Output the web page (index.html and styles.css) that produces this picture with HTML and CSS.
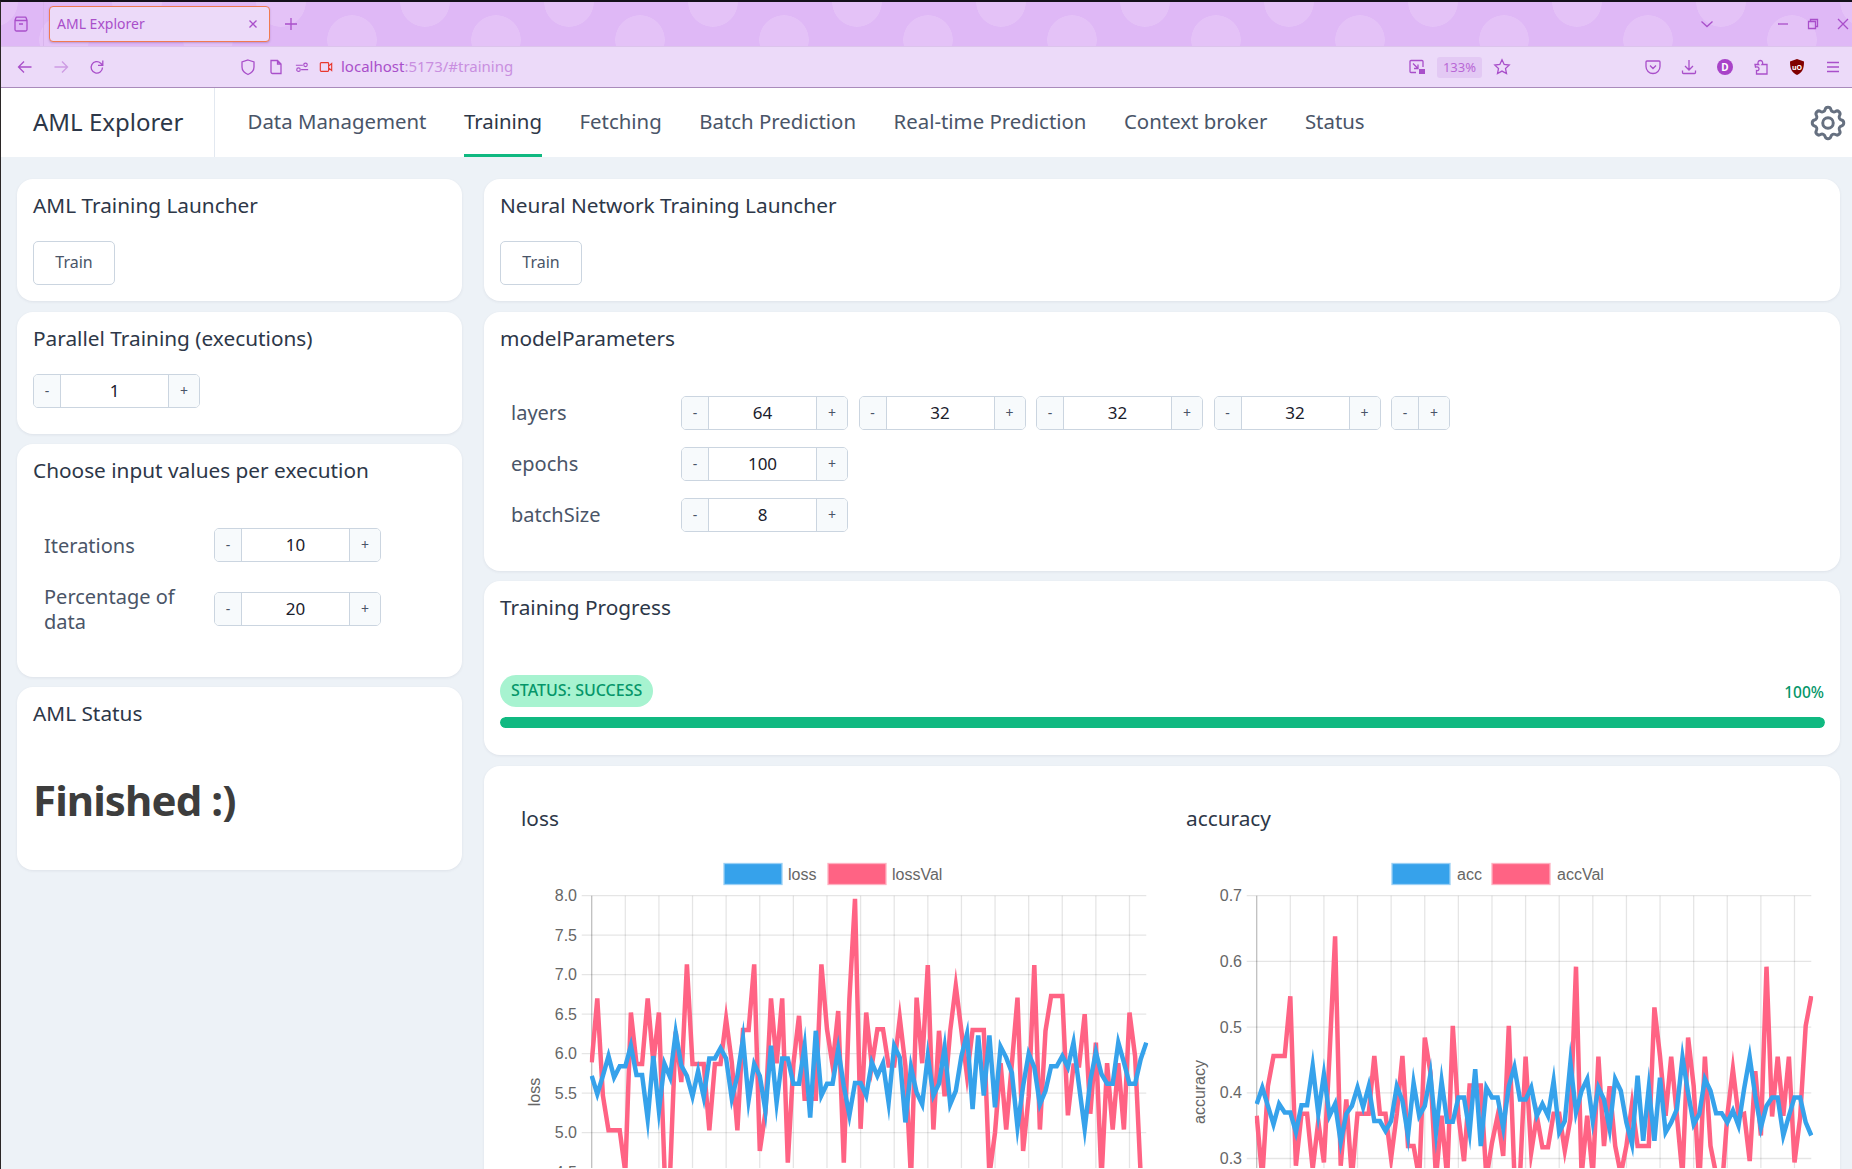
FILE: index.html
```html
<!DOCTYPE html>
<html>
<head>
    <meta charset="UTF-8">
    <title>AML Explorer</title>
    <link rel="stylesheet" href="styles.css">
</head>
<body>
<div class="window">
    <div class="tabbar">
        <svg class="ic view-btn" viewBox="0 0 18 18"><path d="M3 5.5h12v9a1.5 1.5 0 0 1-1.500 1.500h-9a1.500 1.500 0 0 1-1.500-1.500zM3 5.500l.8-2.500a1 1 0 0 1 1-.8h8.400a1 1 0 0 1 1 .8l.8 2.500M7 9h4"/></svg>
        <div class="tab-sep"></div>
        <div class="tab">
            <span class="tab-title">AML Explorer</span>
            <svg class="ic tab-close" viewBox="0 0 10 10"><path d="M1.500 1.500l7 7M8.500 1.500l-7 7"/></svg>
        </div>
        <svg class="ic new-tab" viewBox="0 0 14 14"><path d="M7 1v12M1 7h12"/></svg>
        <div class="tabbar-right">
            <svg class="ic chevron" viewBox="0 0 14 8"><path d="M1.500 1.500L7 6.500l5.500-5"/></svg>
            <svg class="ic win-min" viewBox="0 0 12 12"><path d="M1 6h10"/></svg>
            <svg class="ic win-max" viewBox="0 0 12 12"><path d="M1.500 3.500h7v7h-7zM3.500 3.500v-2h7v7h-2"/></svg>
            <svg class="ic win-close" viewBox="0 0 12 12"><path d="M1 1l10 10M11 1L1 11"/></svg>
        </div>
    </div>
    <div class="toolbar">
        <svg class="ic tool" viewBox="0 0 18 18"><path d="M15.500 9h-13M8 3.500L2.500 9 8 14.500"/></svg>
        <svg class="ic tool dim" viewBox="0 0 18 18"><path d="M2.500 9h13M10 3.500L15.500 9 10 14.500"/></svg>
        <svg class="ic tool" viewBox="0 0 18 18"><path d="M14.500 9.500a5.700 5.700 0 1 1-1.800-4.300l1.800 1.800M14.800 2.500v4.800H10"/></svg>
        <div class="url-group">
            <svg class="ic tool" viewBox="0 0 18 18"><path d="M9 2l6 2v5c0 3.500-2.500 6-6 7.500C5.500 15 3 12.500 3 9V4z"/></svg>
            <svg class="ic tool" viewBox="0 0 18 18"><path d="M4 2.500h6.500L14 6v9.500H5.500A1.500 1.500 0 0 1 4 14zM10.500 2.500V6H14"/></svg>
            <svg class="ic tool-sm" viewBox="0 0 16 16"><path d="M1 6h8M7 11h8"/><circle cx="12" cy="5.500" r="2"/><circle cx="4" cy="11" r="2"/></svg>
            <svg class="ic tool-sm red" viewBox="0 0 16 16"><path d="M2.500 3h7.500a1 1 0 0 1 1 1v8a1 1 0 0 1-1 1H2.500a1 1 0 0 1-1-1V4a1 1 0 0 1 1-1zM11 7l3.500-3v8L11 9"/></svg>
            <span class="url"><span class="url-host">localhost</span>:5173/#training</span>
        </div>
        <div class="tool-right">
            <svg class="ic tool" viewBox="0 0 18 18"><path d="M8 14.500H3a1 1 0 0 1-1-1v-10a1 1 0 0 1 1-1h11a1 1 0 0 1 1 1V9M5 5.500l5 5M10 6.500v4H6"/><rect class="ic-fill" x="11" y="11" width="6" height="5"/></svg>
            <span class="zoom-level">133%</span>
            <svg class="ic tool" viewBox="0 0 18 18"><path d="M9 1.800l2.200 4.700 5 .6-3.700 3.500 1 5L9 13.100l-4.500 2.500 1-5L1.800 7.100l5-.6z"/></svg>
            <div class="ext-group">
                <svg class="ic tool" viewBox="0 0 18 18"><path d="M3 3h12a1 1 0 0 1 1 1v4.500a7 7 0 0 1-14 0V4a1 1 0 0 1 1-1zM6 7.500l3 3 3-3"/></svg>
                <svg class="ic tool" viewBox="0 0 18 18"><path d="M9 2v9.500M5 8l4 4 4-4M2.500 12.500v2a1 1 0 0 0 1 1h11a1 1 0 0 0 1-1v-2"/></svg>
                <span class="avatar">D</span>
                <svg class="ic tool" viewBox="0 0 18 18"><path d="M3 6.500h3.500c-1-1 -.8-4 1.800-4s2.800 3 1.800 4H15v9.500H4.500v-3.500c1.500.5 2.500-.2 2.500-1.700S5.500 8.500 3.500 9.200z"/></svg>
                <svg class="tool" viewBox="0 0 18 18"><path class="ublock" d="M9 1l7 2.500c0 7-1.500 11-7 13.500C3.500 14.500 2 10.500 2 3.500z"/><text class="ublock-text" x="9" y="11.500">uO</text></svg>
                <svg class="ic tool" viewBox="0 0 18 18"><path d="M3 4.500h12M3 9h12M3 13.500h12"/></svg>
            </div>
        </div>
    </div>

    <div class="navbar">
        <div class="brand">AML Explorer</div>
        <nav class="nav">
            <a>Data Management</a>
            <a class="active">Training</a>
            <a>Fetching</a>
            <a>Batch Prediction</a>
            <a>Real-time Prediction</a>
            <a>Context broker</a>
            <a>Status</a>
        </nav>
        <svg class="gear" viewBox="0 0 24 24"><path d="M10.325 4.317c.426-1.756 2.924-1.756 3.350 0a1.724 1.724 0 002.573 1.066c1.543-.94 3.310.826 2.370 2.370a1.724 1.724 0 001.065 2.572c1.756.426 1.756 2.924 0 3.350a1.724 1.724 0 00-1.066 2.573c.94 1.543-.826 3.310-2.370 2.370a1.724 1.724 0 00-2.572 1.065c-.426 1.756-2.924 1.756-3.350 0a1.724 1.724 0 00-2.573-1.066c-1.543.94-3.310-.826-2.370-2.370a1.724 1.724 0 00-1.065-2.572c-1.756-.426-1.756-2.924 0-3.350a1.724 1.724 0 001.066-2.573c-.94-1.543.826-3.310 2.370-2.370.996.608 2.296.07 2.572-1.065z"/><path d="M15 12a3 3 0 11-6 0 3 3 0 016 0z"/></svg>
    </div>

    <div class="content">
        <div class="col">
            <section class="card">
                <h2>AML Training Launcher</h2>
                <button class="btn">Train</button>
            </section>
            <section class="card">
                <h2>Parallel Training (executions)</h2>
                <div class="single-step">
                    <div class="stepper"><span class="minus">-</span><span class="val">1</span><span class="plus">+</span></div>
                </div>
            </section>
            <section class="card">
                <h2>Choose input values per execution</h2>
                <div class="params">
                    <div class="param">
                        <label>Iterations</label>
                        <div class="stepper"><span class="minus">-</span><span class="val">10</span><span class="plus">+</span></div>
                    </div>
                    <div class="param">
                        <label>Percentage of data</label>
                        <div class="stepper"><span class="minus">-</span><span class="val">20</span><span class="plus">+</span></div>
                    </div>
                </div>
            </section>
            <section class="card">
                <h2>AML Status</h2>
                <h1 class="finished">Finished :)</h1>
            </section>
        </div>
        <div class="col">
            <section class="card">
                <h2>Neural Network Training Launcher</h2>
                <button class="btn">Train</button>
            </section>
            <section class="card">
                <h2>modelParameters</h2>
                <div class="params">
                    <div class="param">
                        <label>layers</label>
                        <div class="stepper"><span class="minus">-</span><span class="val">64</span><span class="plus">+</span></div>
                        <div class="stepper"><span class="minus">-</span><span class="val">32</span><span class="plus">+</span></div>
                        <div class="stepper"><span class="minus">-</span><span class="val">32</span><span class="plus">+</span></div>
                        <div class="stepper"><span class="minus">-</span><span class="val">32</span><span class="plus">+</span></div>
                        <div class="stepper"><span class="minus">-</span><span class="plus">+</span></div>
                    </div>
                    <div class="param">
                        <label>epochs</label>
                        <div class="stepper"><span class="minus">-</span><span class="val">100</span><span class="plus">+</span></div>
                    </div>
                    <div class="param">
                        <label>batchSize</label>
                        <div class="stepper"><span class="minus">-</span><span class="val">8</span><span class="plus">+</span></div>
                    </div>
                </div>
            </section>
            <section class="card">
                <h2>Training Progress</h2>
                <div class="progress-head">
                    <span class="badge">STATUS: SUCCESS</span>
                    <span class="percent">100%</span>
                </div>
                <div class="bar"><div class="bar-fill" style="width:100%"></div></div>
            </section>
            <section class="card charts">
                <div class="chart">
                    <h2>loss</h2>
                    <div id="lossChart"></div>
                </div>
                <div class="chart">
                    <h2>accuracy</h2>
                    <div id="accChart"></div>
                </div>
            </section>
        </div>
    </div>
</div>
<script src="charts.js"></script>
</body>
</html>
```
FILE: styles.css
```css
*{ margin:0; padding:0; box-sizing:border-box; }
html, body{ height:100%; overflow:hidden; }
body{ font-family:"Noto Sans", sans-serif; background:#edf2f7; color:#2d3748; }

.window{ height:1169px; overflow:hidden; border-top:2px solid #14101a; border-left:1px solid #2b2727; }

/* browser chrome */
.tabbar{
    display:flex; align-items:center; height:45px; padding:0 3px 0 11px;
    background-color:#dfb8f6;
    background-image:radial-gradient(circle 25px at 72px 0, #e4c2f7 98%, transparent 100%), radial-gradient(circle 25px at 72px 38px, #e4c2f7 98%, transparent 100%);
    background-size:144px 44px;
    background-position:64px 0, -9px 0;
    background-repeat:repeat-x;
    border-bottom:1px solid #dcc4ec;
}
.ic{ fill:none; stroke:#a94fca; stroke-width:1.3; flex:none; }
.ic-fill{ fill:#a94fca; stroke:none; }
.view-btn{ width:18px; height:18px; }
.tab-sep{ width:1px; height:44px; background:#d8b4ec; margin:0 5px 0 13px; }
.tab{
    display:flex; align-items:center; justify-content:space-between;
    width:221px; height:36px; padding:0 11px 0 7px; margin-top:-1px;
    background:#ecdaf9; border:1px solid #f07a50; border-radius:4px;
    box-shadow:0 1px 2px rgba(80,30,100,.25);
}
.tab-title{ font-size:14px; color:#a94fca; }
.tab-close{ width:10px; height:10px; }
.new-tab{ width:14px; height:14px; margin-left:14px; }
.tabbar-right{ display:flex; align-items:center; margin-left:auto; }
.chevron{ width:14px; height:8px; margin-right:63px; }
.win-min, .win-max, .win-close{ width:12px; height:12px; margin-left:18px; }
.win-min{ margin-left:0; }

.toolbar{
    display:flex; align-items:center; gap:18px; height:41px; padding:0 10px 0 15px;
    background:#ecdaf9; border-bottom:1px solid #a98bbb;
}
.tool{ width:18px; height:18px; flex:none; }
.tool-sm{ width:14px; height:14px; }
.dim{ opacity:.45; }
.red{ stroke:#e9382e; }
.url-group{ display:flex; align-items:center; gap:10px; margin-left:115px; }
.url{ font-size:15px; line-height:18px; margin:-2px 0 0 -2px; color:#c98fe0; }
.url-host{ color:#a94fca; }
.tool-right{ display:flex; align-items:center; gap:11px; margin-left:auto; }
.zoom-level{ width:45px; height:21px; font-size:13px; line-height:21px; text-align:center; color:#b968d6; background:#e3c9f4; border-radius:3px; }
.ext-group{ display:flex; align-items:center; gap:18px; margin-left:122px; }
.avatar{ width:16px; height:16px; margin:0 1px; border-radius:50%; background:#a843c8; color:#fff; font-size:10px; font-weight:700; line-height:16px; text-align:center; }
.ublock{ fill:#800000; }
.ublock-text{ fill:#fff; font-size:7px; font-weight:700; text-anchor:middle; }

/* app nav */
.navbar{ display:flex; align-items:stretch; height:69px; background:#fff; }
.brand{ width:214px; padding-left:32px; line-height:67px; font-size:24px; border-right:1px solid #e2e8f0; }
.nav{ display:flex; gap:37.500px; padding-left:32.500px; }
.nav a{ display:block; height:69px; line-height:66px; font-size:20.400px; color:#4a5568; border-bottom:3px solid transparent; }
.nav a.active{ color:#2d3748; border-bottom-color:#10b981; }
.gear{ width:42px; height:42px; margin:14px 3px 0 auto; fill:none; stroke:#667080; stroke-width:1.700; }

/* page */
.content{ display:grid; grid-template-columns:445px 1356px; column-gap:22px; padding:22px 0 0 16px; }
.col{ display:flex; flex-direction:column; gap:10.67px; }
.card{ padding:11px 16px 16px; background:#fff; border-radius:16px; box-shadow:0 1px 3px rgba(45,55,72,.08); }
h2{ height:32px; line-height:30px; font-size:20.800px; font-weight:400; color:#2d3748; }
.btn{ display:block; width:82px; height:44px; margin-top:19px; padding-bottom:2px; font:inherit; font-size:16px; color:#4a5568; background:#fff; border:1px solid #cbd5e0; border-radius:5px; }

.single-step{ margin:19px 0 10px; }
.stepper{ display:inline-flex; height:34px; flex:none; font-size:17px; color:#1a202c; border:1px solid #cbd5e0; border-radius:5px; overflow:hidden; }
.stepper span{ display:block; line-height:31px; text-align:center; }
.minus, .plus{ background:#f7fafc; font-size:14px; color:#4a5568; }
.minus{ width:26px; }
.plus{ width:31px; border-left:1px solid #cbd5e0; }
.val{ width:108px; border-left:1px solid #cbd5e0; }

.params{ display:flex; flex-direction:column; gap:17px; margin:41px 0 23px; padding-left:11px; }
.param{ display:flex; align-items:center; gap:10.500px; }
.param label{ width:159.500px; flex:none; padding:4.200px 0; font-size:20px; line-height:25px; color:#4a5568; }

.progress-head{ display:flex; align-items:center; justify-content:space-between; height:32px; margin-top:51px; }
.badge{ height:32px; padding:0 11px; line-height:31px; font-size:16px; font-weight:500; color:#059669; background:#a7f3d0; border-radius:16px; }
.percent{ margin-top:2px; font-size:15.500px; font-weight:500; color:#059669; }
.bar{ height:11px; margin:10px -1px 11px 0; background:#d1fae5; border-radius:6px; overflow:hidden; }
.bar-fill{ height:11px; background:#10b981; border-radius:6px; }

.finished{ height:60px; margin:40px 0 24px; line-height:60px; font-size:42px; letter-spacing:-.9px; font-weight:700; color:#3d3d3d; }

.charts{ display:grid; grid-template-columns:665px 665px; padding:37px 0 0 37px; height:600px; }
.chart svg{ display:block; margin-top:14px; }
.tick, .legend-label, .axis-title{ font-family:"Liberation Sans", Arial, sans-serif; font-size:16px; fill:#666; }
.tick{ text-anchor:end; }
.axis-title{ text-anchor:middle; }
```
FILE: charts.js
```js
(function(){
    var lossVal = [5.89,6.70,5.47,5.03,5.03,5.03,4.50,6.52,5.87,5.87,6.70,5.89,6.52,4.54,4.48,6.28,5.64,7.13,5.87,5.87,5.87,5.03,5.87,5.87,6.44,5.89,5.03,6.30,6.30,7.13,4.77,5.26,6.70,5.88,6.70,4.62,5.87,6.48,5.43,5.43,5.43,7.13,6.31,5.85,6.54,4.62,6.69,7.96,5.05,6.52,5.85,6.31,6.31,5.85,5.85,6.45,5.85,4.41,6.71,5.88,7.12,5.04,6.29,5.46,6.29,6.86,6.29,5.72,6.30,6.30,6.30,4.46,5.00,5.88,5.04,5.88,6.71,4.77,5.46,7.12,5.04,6.29,6.73,6.73,6.73,5.22,5.85,5.85,6.50,5.24,6.14,4.41,5.88,5.04,5.88,5.04,6.52,5.97,4.46,4.20];
    var loss = [5.72,5.49,5.72,5.97,5.70,5.84,5.84,6.10,5.73,5.73,5.17,5.97,5.28,5.87,5.70,6.27,5.85,5.72,5.46,5.78,5.45,5.94,5.94,6.07,5.94,5.43,5.72,6.19,5.41,5.87,5.72,5.28,6.10,5.38,5.94,5.94,5.62,5.62,6.10,5.19,6.29,5.47,5.62,5.62,6.06,5.59,5.22,5.63,5.63,5.47,5.89,5.72,5.88,5.38,6.10,5.95,5.13,5.83,5.51,5.36,5.97,5.47,5.62,6.08,5.36,5.53,5.97,6.25,5.30,6.23,5.47,6.23,5.32,6.09,5.95,5.76,5.07,5.59,6.00,5.83,5.36,5.53,5.84,5.84,5.97,5.83,6.14,5.59,5.05,5.66,6.02,5.74,5.62,5.62,6.14,5.89,5.62,5.62,5.93,6.14];
    var accVal = [.365,.27,.41,.456,.456,.456,.547,.289,.368,.368,.284,.357,.294,.456,.638,.289,.39,.27,.368,.368,.368,.456,.368,.368,.30,.368,.456,.319,.319,.27,.484,.431,.27,.365,.27,.502,.365,.296,.411,.411,.411,.27,.324,.365,.304,.502,.274,.274,.455,.309,.365,.317,.317,.368,.368,.312,.36,.592,.274,.365,.274,.455,.319,.41,.319,.276,.319,.383,.319,.319,.319,.53,.456,.365,.455,.365,.274,.484,.41,.26,.455,.319,.276,.25,.365,.436,.365,.368,.296,.433,.335,.592,.364,.455,.365,.455,.294,.362,.502,.547];
    var acc = [.383,.408,.38,.352,.383,.37,.37,.34,.381,.381,.441,.368,.428,.365,.383,.325,.368,.38,.408,.378,.41,.357,.357,.342,.357,.41,.388,.335,.415,.365,.38,.428,.34,.418,.356,.356,.393,.393,.34,.436,.319,.408,.393,.393,.347,.41,.439,.39,.39,.408,.365,.383,.365,.418,.34,.357,.446,.37,.403,.421,.357,.408,.39,.345,.421,.403,.355,.322,.426,.327,.408,.327,.423,.34,.355,.375,.454,.40,.352,.368,.421,.403,.369,.369,.355,.373,.35,.406,.454,.395,.347,.38,.393,.393,.335,.365,.393,.393,.355,.335];

    var X0 = 70.7, X1 = 625.3, TOP = 46.7, BLUE = '#36a2eb', PINK = '#ff6384';

    function line(data, yOf, color, clipId){
        var step = (X1 - X0) / (data.length - 1);
        var pts = data.map(function(v, i){
            return (X0 + i * step).toFixed(1) + ',' + yOf(v).toFixed(1);
        }).join(' ');
        return '<polyline clip-path="url(#' + clipId + ')" points="' + pts + '" fill="none" stroke="' + color + '" stroke-width="4.500" stroke-miterlimit="10"/>';
    }

    function legendItem(x, color, border, labelX, label){
        return '<rect x="' + x + '" y="14.500" width="58" height="21" fill="' + color + '" stroke="' + border + '" stroke-width="1.300"/>' +
            '<text class="legend-label" x="' + labelX + '" y="31">' + label + '</text>';
    }

    function draw(id, o){
        var yOf = function(v){ return TOP + (o.max - v) * o.scale; };
        var clipId = id + 'Clip';
        var s = '<svg width="650" height="319"><defs><clipPath id="' + clipId + '"><rect x="' + (X0 - 2) + '" y="' + (TOP - 2) + '" width="' + (X1 - X0 + 4) + '" height="400"/></clipPath></defs>';
        var i, x, y;
        for(i = 0; i <= 16; i++){
            x = X0 + i * (X1 - X0) / 99 * 6;
            s += '<line x1="' + x + '" x2="' + x + '" y1="' + TOP + '" y2="330" stroke="rgba(0,0,0,' + (i ? .1 : .25) + ')" stroke-width="1.300"/>';
        }
        o.ticks.forEach(function(t){
            y = yOf(t);
            s += '<line x1="60.700" x2="' + X1 + '" y1="' + y + '" y2="' + y + '" stroke="rgba(0,0,0,.1)" stroke-width="1.300"/>';
            s += '<text class="tick" x="56" y="' + (y + 5.500) + '">' + t.toFixed(1) + '</text>';
        });
        s += legendItem(o.legend[0], BLUE, '#9ad0f5', o.legend[1], o.names[0]);
        s += legendItem(o.legend[2], PINK, '#ffb1c1', o.legend[3], o.names[1]);
        s += '<text class="axis-title" transform="translate(19,243) rotate(-90)">' + o.axis + '</text>';
        s += line(o.val, yOf, PINK, clipId);
        s += line(o.train, yOf, BLUE, clipId);
        document.getElementById(id).innerHTML = s + '</svg>';
    }

    draw('lossChart', {
        max: 8, scale: 79, ticks: [8, 7.5, 7, 6.5, 6, 5.5, 5, 4.5],
        train: loss, val: lossVal, names: ['loss', 'lossVal'], axis: 'loss',
        legend: [203, 267, 307, 371]
    });
    draw('accChart', {
        max: .7, scale: 657, ticks: [.7, .6, .5, .4, .3],
        train: acc, val: accVal, names: ['acc', 'accVal'], axis: 'accuracy',
        legend: [206, 271, 306, 371]
    });
}());
```
